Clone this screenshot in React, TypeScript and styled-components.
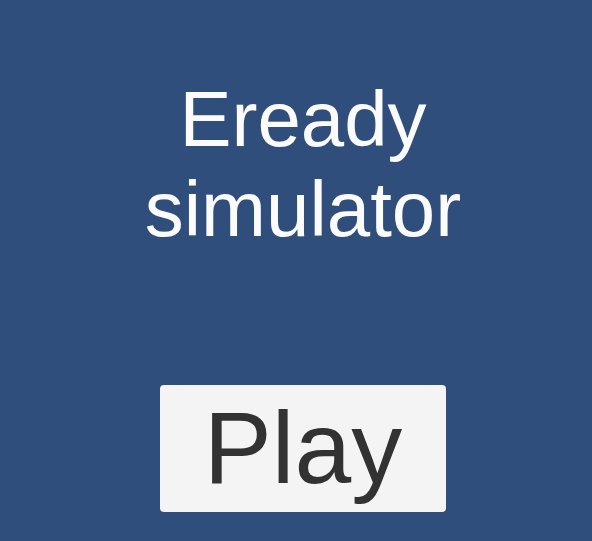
import React from "react";
import styled, { createGlobalStyle } from "styled-components";

const GlobalStyle = createGlobalStyle`
  html, body {
    margin: 0;
    padding: 0;
    background: #2f4e7c;
  }
  * {
    box-sizing: border-box;
  }
`;

const Screen = styled.main`
  width: 100%;
  min-height: 100vh;
  display: flex;
  flex-direction: column;
  align-items: center;
  padding: 74px 0 0 14px;
  background: #2f4e7c;
  font-family: "Liberation Sans", Arial, sans-serif;
`;

const Title = styled.h1`
  margin: 0;
  font-size: 78px;
  font-weight: 400;
  line-height: 90px;
  color: #fbfbfb;
  text-align: center;
`;

const PlayButton = styled.button`
  margin-top: 131px;
  width: 286px;
  height: 127px;
  display: flex;
  align-items: center;
  justify-content: center;
  padding: 0;
  border: none;
  border-radius: 4px;
  background: #f4f4f4;
  color: #323232;
  font-family: "Liberation Sans", Arial, sans-serif;
  font-size: 102px;
  line-height: normal;
  cursor: pointer;
`;

export default function App() {
  return (
    <>
      <GlobalStyle />
      <Screen>
        <Title>
          Eready
          <br />
          simulator
        </Title>
        <PlayButton type="button">Play</PlayButton>
      </Screen>
    </>
  );
}
